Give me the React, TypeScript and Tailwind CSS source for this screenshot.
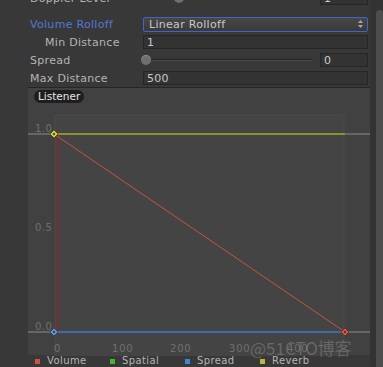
import React from 'react';

const labelCls = "w-[143px] shrink-0 tracking-[0.3px] text-[#b4b4b4]";
const fieldCls = "flex h-[14px] flex-1 items-center border border-[#262626] bg-[#333333] pl-[3px] tracking-[0.3px] text-[#c8c8c8]";

const Slider = ({ knob, value }: { knob: number; value: string }) => (
  <div className="flex flex-1 items-center">
    <div className="relative h-[14px] w-[172px]">
      <div className="absolute left-[2px] right-[2px] top-[6px] h-[2px] rounded-full border-b border-[#4a4a4a] bg-[#232323]" />
      <div
        className="absolute top-[2px] h-[10px] w-[10px] rounded-full bg-[#6f6f6f] shadow-[inset_0_1px_0_#8a8a8a]"
        style={{ left: knob }}
      />
    </div>
    <div className={fieldCls + " ml-[5px]"}>{value}</div>
  </div>
);

const ticks = [
  { x: 26, t: '0' },
  { x: 84, t: '100' },
  { x: 142, t: '200' },
  { x: 201, t: '300' },
  { x: 259, t: '400' },
];

const Diamond = ({ x, y, c }: { x: number; y: number; c: string }) => (
  <g>
    <polygon points={`${x},${y - 4} ${x + 4},${y} ${x},${y + 4} ${x - 4},${y}`} fill={c} stroke="#2a2a2a" strokeWidth={0.6} />
    <rect x={x - 1} y={y - 1} width={2} height={2} fill="#3a3a2a" transform={`rotate(45 ${x} ${y})`} />
  </g>
);

const legend = [
  { c: 'bg-[#d0523e]', t: 'Volume' },
  { c: 'bg-[#45b52f]', t: 'Spatial' },
  { c: 'bg-[#3f86d6]', t: 'Spread' },
  { c: 'bg-[#b9b93a]', t: 'Reverb' },
];

export default function App() {
  return (
    <div className="flex h-[367px] w-[383px] overflow-hidden bg-[#383838] font-['DejaVu_Sans',sans-serif] text-[11px] leading-none">
      <div className="relative flex w-[370px] flex-col">
        {/* Doppler Level (cut off) */}
        <div className="-mt-[9px] flex h-[14px] items-center pr-[2px]">
          <div className={labelCls + " pl-[30px]"}>Doppler Level</div>
          <Slider knob={31} value="1" />
        </div>

        <div className="mt-[12px] flex h-[14px] items-center pr-[2px]">
          <div className="w-[143px] shrink-0 pl-[30px] tracking-[0.3px] text-[#5079d6]">Volume Rolloff</div>
          <div className="flex h-[15px] flex-1 items-center justify-between rounded-[2px] border border-[#4063cc] bg-gradient-to-b from-[#474747] to-[#3a3a3a] pl-[5px] pr-[4px] tracking-[0.3px] text-[#c8c8c8]">
            <span>Linear Rolloff</span>
            <svg width="5" height="8" viewBox="0 0 5 8">
              <polygon points="2.5,0 5,3 0,3" fill="#a8a8a8" />
              <polygon points="0,5 5,5 2.5,8" fill="#a8a8a8" />
            </svg>
          </div>
        </div>

        <div className="mt-[4px] flex h-[14px] items-center pr-[2px]">
          <div className={labelCls + " pl-[45px]"}>Min Distance</div>
          <div className={fieldCls}>1</div>
        </div>

        <div className="mt-[4px] flex h-[14px] items-center pr-[2px]">
          <div className={labelCls + " pl-[30px]"}>Spread</div>
          <Slider knob={-2} value="0" />
        </div>

        <div className="mt-[4px] flex h-[14px] items-center pr-[2px]">
          <div className={labelCls + " pl-[30px]"}>Max Distance</div>
          <div className={fieldCls}>500</div>
        </div>

        {/* curve graph */}
        <div className="relative ml-[28px] mt-[2px] h-[268px] w-[342px] border-t border-[#262626] bg-[#414141]">
          <svg width="342" height="268" className="block" fontFamily="DejaVu Sans, sans-serif">
            <rect x="27" y="27" width="289" height="245" fill="#444444" stroke="#4b4b4b" strokeWidth="1" />
            <line x1="0" y1="46" x2="26" y2="46" stroke="#8c8c8c" strokeWidth="1" />
            <line x1="317" y1="46" x2="342" y2="46" stroke="#8c8c8c" strokeWidth="1" />
            <line x1="0" y1="244" x2="26" y2="244" stroke="#8c8c8c" strokeWidth="1" />
            <line x1="317" y1="244" x2="342" y2="244" stroke="#8c8c8c" strokeWidth="1" />
            <line x1="30" y1="46" x2="30" y2="243" stroke="#7a2c2c" strokeWidth="2" />
            <line x1="26" y1="46" x2="317" y2="46" stroke="#a8a826" strokeWidth="1.5" />
            <line x1="26" y1="244" x2="317" y2="244" stroke="#3b7ad0" strokeWidth="1.5" />
            <line x1="26" y1="46" x2="317" y2="244" stroke="#c4543f" strokeWidth="1" />
            <text x="7" y="44" fontSize="10" fill="#707070" letterSpacing="0.5">1.0</text>
            <text x="7" y="143" fontSize="10" fill="#707070" letterSpacing="0.5">0.5</text>
            <text x="7" y="242" fontSize="10" fill="#707070" letterSpacing="0.5">0.0</text>
            {ticks.map((k) => (
              <text key={k.t} x={k.x} y="264" fontSize="10" fill="#707070" letterSpacing="0.8">{k.t}</text>
            ))}
            <Diamond x={26} y={46} c="#d6d63c" />
            <Diamond x={26} y={244} c="#5d9ce4" />
            <Diamond x={317} y={244} c="#e2553f" />
          </svg>
          <div className="absolute left-[6px] top-[2px] rounded-full bg-[#1e1e1e] px-[4px] py-[1px] text-[10.5px] leading-[11px] text-[#e6e6e6]">
            Listener
          </div>
        </div>

        {/* legend */}
        <div className="flex h-[12px] items-center pl-[35px] text-[10px] text-[#b4b4b4]">
          {legend.map((l) => (
            <div key={l.t} className="flex w-[75px] items-center gap-[7px]">
              <span className={"h-[5px] w-[5px] " + l.c} />
              <span className="tracking-[0.4px]">{l.t}</span>
            </div>
          ))}
        </div>

        <div className="pointer-events-none absolute left-[250px] top-[339px] font-['Noto_Sans_CJK_SC',sans-serif] text-[17px] text-white/20">
          @51CTO博客
        </div>
      </div>

      {/* scrollbar */}
      <div className="flex w-[13px] bg-[#333333] pl-[6px]">
        <div className="mt-[10px] w-[7px] rounded-t-full bg-[#4d4d4d]" />
      </div>
    </div>
  );
}
